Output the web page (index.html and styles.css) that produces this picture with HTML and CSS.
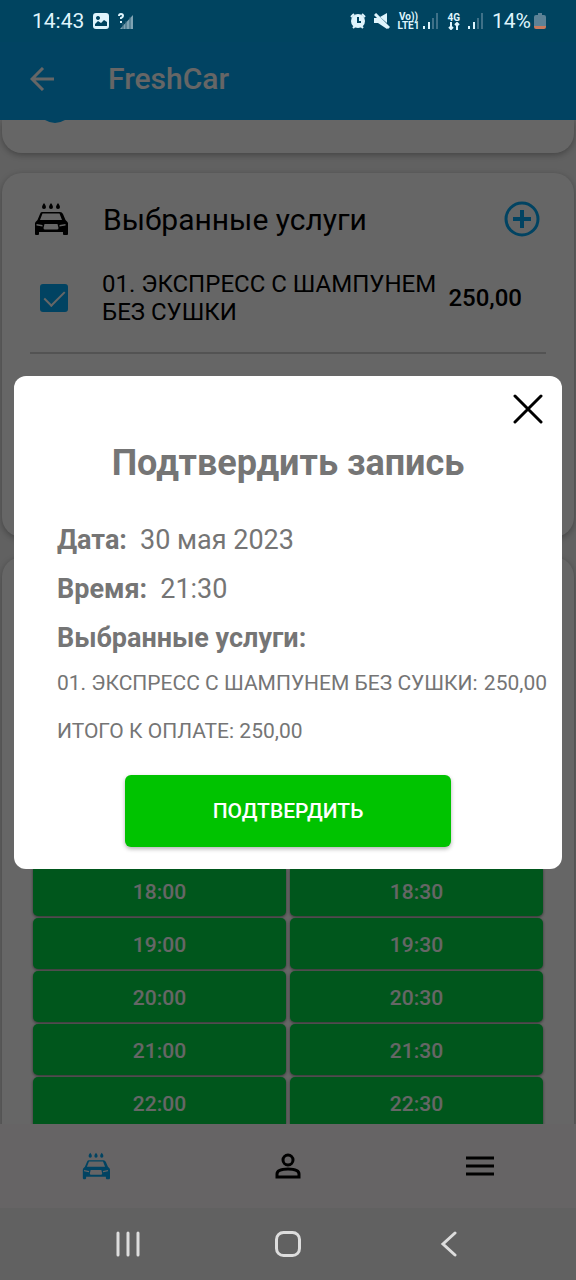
FILE: index.html
```html
<!doctype html>
<html lang="ru">
<head>
<meta charset="utf-8">
<meta name="viewport" content="width=device-width, initial-scale=1">
<title>FreshCar</title>
<link rel="stylesheet" href="styles.css">
</head>

<body>
<svg class="defs" width="0" height="0">
	<symbol id="car" viewBox="0 0 34 34">
		<path fill="currentColor" fill-rule="evenodd" d="M8 10h18q2 0 3 2l2.500 6 1.500 1.500q1 1 1 2V32q0 1-1 1h-3q-1 0-1-1v-2H5v2q0 1-1 1H2q-1 0-1-1V21.500q0-1 1-2L3.500 18 6 12q.5-2 2-2zM8.500 11.500L6 18h22l-2.500-6.500zM2.500 22v1.500l6 1v-1.500zM31.500 22l-6 1v1.500l6-1zM10.500 22l-1 4q0 1.500 1.500 1.500h12q1.500 0 1.500-1.500l-1-4z"/>
		<path fill="currentColor" d="M10 1q2 2.500 2 4a2 2 0 0 1-4 0q0-1.500 2-4zM17 1q2 2.500 2 4a2 2 0 0 1-4 0q0-1.500 2-4zM24 1q2 2.500 2 4a2 2 0 0 1-4 0q0-1.500 2-4z"/>
	</symbol>
</svg>

<div class="screen">
	<div class="status">
		<span class="clock">14:43</span>
		<svg width="16" height="16" viewBox="0 0 16 16"><path fill="currentColor" fill-rule="evenodd" d="M3 0h10q3 0 3 3v10q0 3-3 3H3q-3 0-3-3V3q0-3 3-3zM2 13h12V9l-3-2-3 3-3-2-3 3zM5 3a2 2 0 1 0 .01 0z"/></svg>
		<svg class="nosim" width="16" height="16" viewBox="0 0 16 16"><path d="M2 16L15 2v14z" fill="#7fa3b3"/><path d="M5 10v6M8 8v8M12 4v12" stroke="#34667d"/><path d="M1 3q0-2 2-2t2 2q0 1-2 2v1M3 8v2" fill="none" stroke="currentColor" stroke-width="2"/></svg>
		<div class="status-right">
			<svg width="16" height="16" viewBox="0 0 16 16"><circle cx="8" cy="8" r="7" fill="currentColor"/><path d="M1 4l3-3M15 4l-3-3M3 15l2-2M13 15l-2-2" stroke="currentColor" stroke-width="2"/><path d="M8 4v5h3" fill="none" stroke="#004460" stroke-width="2"/></svg>
			<svg width="16" height="16" viewBox="0 0 16 16"><path fill="currentColor" d="M0 5h4l9 9V16L7 12 4 10H0zM6 4l7-4v10z"/><path d="M1 1l14 14" stroke="currentColor" stroke-width="3"/></svg>
			<span class="net">Vo))<br>LTE1</span>
			<svg class="bars" width="16" height="16" viewBox="0 0 16 16"><path d="M1 13v3M6 9v7" stroke="currentColor" stroke-width="2"/><path d="M10 5v11M14 0v16" stroke="#3f7188" stroke-width="2"/></svg>
			<span class="net">4G<svg width="12" height="8" viewBox="0 0 12 8"><path d="M3 0v7M1 5l2 2 2-2M9 8V1M7 3l2-2 2 2" fill="none" stroke="currentColor" stroke-width="2"/></svg></span>
			<svg width="16" height="16" viewBox="0 0 16 16"><path d="M1 13v3M6 9v7" stroke="currentColor" stroke-width="2"/><path d="M10 5v11M14 0v16" stroke="#3f7188" stroke-width="2"/></svg>
			<span class="clock">14%</span>
			<svg class="battery" width="12" height="16" viewBox="0 0 12 16"><path d="M4 0h4v2h2q2 0 2 2v9H0V4q0-2 2-2h2z" fill="#5d8296"/><path d="M0 13h12v1q0 2-2 2H2q-2 0-2-2z" fill="#c87a5c"/></svg>
		</div>
	</div>

	<header class="toolbar">
		<button class="icon-btn" aria-label="Назад"><svg width="24" height="24" viewBox="0 0 24 24"><path d="M24 12H2M13 1L2 12l11 11" fill="none" stroke="currentColor" stroke-width="3"/></svg></button>
		<h1>FreshCar</h1>
	</header>

	<main>
		<section class="card card-prev">
			<svg width="20" height="3" viewBox="0 0 20 3"><path d="M0 0q10 6 20 0z" fill="currentColor"/></svg>
		</section>

		<section class="card card-services">
			<div class="card-head">
				<svg width="34" height="34"><use href="#car"/></svg>
				<h2>Выбранные услуги</h2>
				<button class="icon-btn add" aria-label="Добавить"><svg width="36" height="36" viewBox="0 0 36 36"><path d="M18 9v18M9 18h18" stroke="currentColor" stroke-width="4"/><circle cx="18" cy="18" r="16" fill="none" stroke="currentColor" stroke-width="3"/></svg></button>
			</div>
			<div class="service">
				<input type="checkbox" id="service1" checked>
				<label for="service1">01. ЭКСПРЕСС С ШАМПУНЕМ БЕЗ СУШКИ</label>
				<b>250,00</b>
			</div>
		</section>

		<section class="card card-slots">
			<div class="slots">
				<button>18:00</button>
				<button>18:30</button>
				<button>19:00</button>
				<button>19:30</button>
				<button>20:00</button>
				<button>20:30</button>
				<button>21:00</button>
				<button>21:30</button>
				<button>22:00</button>
				<button>22:30</button>
			</div>
		</section>
	</main>

	<nav class="tabs">
		<a href="#wash" class="active" aria-label="Мойка"><svg width="28" height="28"><use href="#car"/></svg></a>
		<a href="#profile" aria-label="Профиль"><svg width="26" height="26" viewBox="0 0 26 26"><g fill="none" stroke="currentColor" stroke-width="3"><circle cx="13" cy="7" r="5"/><path d="M2 24v-3q0-5 11-5t11 5v3z"/></g></svg></a>
		<a href="#menu" aria-label="Меню"><svg width="28" height="20" viewBox="0 0 28 20"><path d="M0 2h28M0 10h28M0 18h28" stroke="currentColor" stroke-width="3"/></svg></a>
	</nav>

	<div class="system">
		<button class="icon-btn" aria-label="Недавние"><svg width="26" height="26" viewBox="0 0 26 26"><path d="M3 2v22M13 2v22M23 2v22" stroke="currentColor" stroke-width="3" stroke-linecap="round"/></svg></button>
		<button class="icon-btn" aria-label="Домой"><svg width="26" height="26" viewBox="0 0 26 26"><rect x="1.500" y="1.500" width="23" height="23" rx="7" fill="none" stroke="currentColor" stroke-width="3"/></svg></button>
		<button class="icon-btn" aria-label="Назад"><svg width="26" height="26" viewBox="0 0 26 26"><path d="M20 2L8 13l12 11" fill="none" stroke="currentColor" stroke-width="3" stroke-linecap="round"/></svg></button>
	</div>
</div>

<div class="overlay">
	<div class="modal" role="dialog" aria-labelledby="modalTitle">
		<button class="icon-btn close" aria-label="Закрыть"><svg width="30" height="30" viewBox="0 0 30 30"><path d="M2 2l26 26M28 2L2 28" stroke="currentColor" stroke-width="3" stroke-linecap="round"/></svg></button>
		<h2 id="modalTitle">Подтвердить запись</h2>
		<p><b>Дата:</b>30 мая 2023</p>
		<p><b>Время:</b>21:30</p>
		<p><b>Выбранные услуги:</b></p>
		<div class="order">
			<span>01. ЭКСПРЕСС С ШАМПУНЕМ БЕЗ СУШКИ:</span>
			<span>250,00</span>
		</div>
		<div class="order">ИТОГО К ОПЛАТЕ: 250,00</div>
		<button class="confirm">ПОДТВЕРДИТЬ</button>
	</div>
</div>
</body>
</html>
```
FILE: styles.css
```css
*{margin:0; padding:0; box-sizing:border-box;}
body{font-family:Roboto,"Noto Sans",sans-serif; color:#000;}
button{font-family:inherit; border:0; cursor:pointer;}
svg{display:block; flex:none;}
.defs{position:absolute;}
.icon-btn{background:none; color:inherit;}

.screen{
	height:100vh;
	display:flex; flex-direction:column;
	background:#f2f2f2;
}

/* system status bar, stays above the overlay */
.status{
	height:42px; padding:0 30px 0 32px;
	display:flex; align-items:center; gap:9px;
	background:#004460; color:#dff4fc;
	position:relative; z-index:20;
}
.clock{font-size:21px; line-height:24px;}
.status-right{
	margin-left:auto;
	display:flex; align-items:center; gap:8px;
}
.net{
	font-size:10px; line-height:9px; font-weight:700;
	text-align:center;
}
.net svg{margin:0 auto;}
.bars{margin-left:-4px;}
.battery{margin-left:-5px;}

.toolbar{
	height:78px; padding:0 30px 4px;
	display:flex; align-items:center; gap:54px;
	background:#03a9f4; color:#fff;
}
.toolbar h1{font-size:30px; line-height:36px; font-weight:500;}

main{
	flex:1; overflow:hidden;
	display:flex; flex-direction:column; gap:20px;
}
.card{
	margin:0 2px; flex:none;
	background:#fff; border-radius:20px;
	box-shadow:0 2px 6px rgba(0,0,0,.3);
}
.card-prev{
	height:33px; padding-left:43px;
	border-radius:0 0 20px 20px;
	color:#03a9f4;
}
.card-services{min-height:364px; padding:28px 28px 0;}
.card-head{
	display:flex; align-items:center;
	padding:0 6px 0 4px; height:36px;
}
.card-head h2{
	margin-left:35px; padding-top:2px;
	font-size:30px; line-height:36px; font-weight:400;
}
.add{margin-left:auto; color:#03a9f4;}
.service{
	display:flex; align-items:center;
	padding:33px 24px 26px 10px;
	border-bottom:2px solid #d0d0d0;
}
.service input{
	appearance:none; flex:none;
	width:28px; height:28px; border-radius:3px;
	background:#03a9f4;
	display:grid; place-items:center;
}
.service input:checked::after{
	content:""; width:9px; height:18px; margin-bottom:5px;
	border:solid #fff; border-width:0 2px 2px 0;
	transform:rotate(45deg);
}
.service label{
	flex:1; margin-left:34px;
	font-size:24px; line-height:28px;
}
.service b{font-size:24px; line-height:28px; font-weight:500;}

.card-slots{padding:308px 31px 30px;}
.slots{
	display:grid; grid-template-columns:1fr 1fr;
	gap:2px 4px;
}
.slots button{
	height:51px; padding-top:3px; border-radius:5px;
	background:#00d846; color:#fff;
	font-size:21px; font-weight:500;
	box-shadow:0 1px 3px rgba(0,0,0,.5);
}

.tabs{
	height:84px;
	display:grid; grid-template-columns:1fr 1fr 1fr; align-items:center;
	background:#fffafc;
}
.tabs a{display:flex; justify-content:center; color:#000;}
.tabs .active{color:#03a9f4;}

.system{
	height:72px; padding:0 48px;
	display:grid; grid-template-columns:1fr 1fr 1fr;
	align-items:center; justify-items:center;
	background:#616161; color:#ddd;
	position:relative; z-index:20;
}

.overlay{
	position:fixed; inset:0; z-index:10;
	display:flex; align-items:center;
	padding:0 14px 36px;
	background:rgba(0,0,0,.6);
}
.modal{
	flex:1; padding:18px 15px 22px 43px;
	display:flex; flex-direction:column;
	background:#fff; color:#757575;
	border-radius:12px;
}
.close{align-self:flex-end; color:#000; margin-right:4px;}
.modal h2{
	margin:18px 28px 40px 0;
	font-size:36px; line-height:42px; font-weight:700;
	text-align:center;
}
.modal p{font-size:27px; line-height:32px; margin-bottom:17px;}
.modal p b{margin-right:13px;}
.order{
	display:flex; justify-content:space-between;
	font-size:21px; line-height:24px; margin-bottom:24px;
	white-space:nowrap;
}
.order + .order{margin-bottom:32px;}
.confirm{
	width:326px; height:72px; margin-right:28px;
	align-self:center;
	background:#00c300; color:#fff;
	border-radius:6px;
	font-size:21px; font-weight:500;
	box-shadow:0 2px 4px rgba(0,0,0,.3);
}
```
